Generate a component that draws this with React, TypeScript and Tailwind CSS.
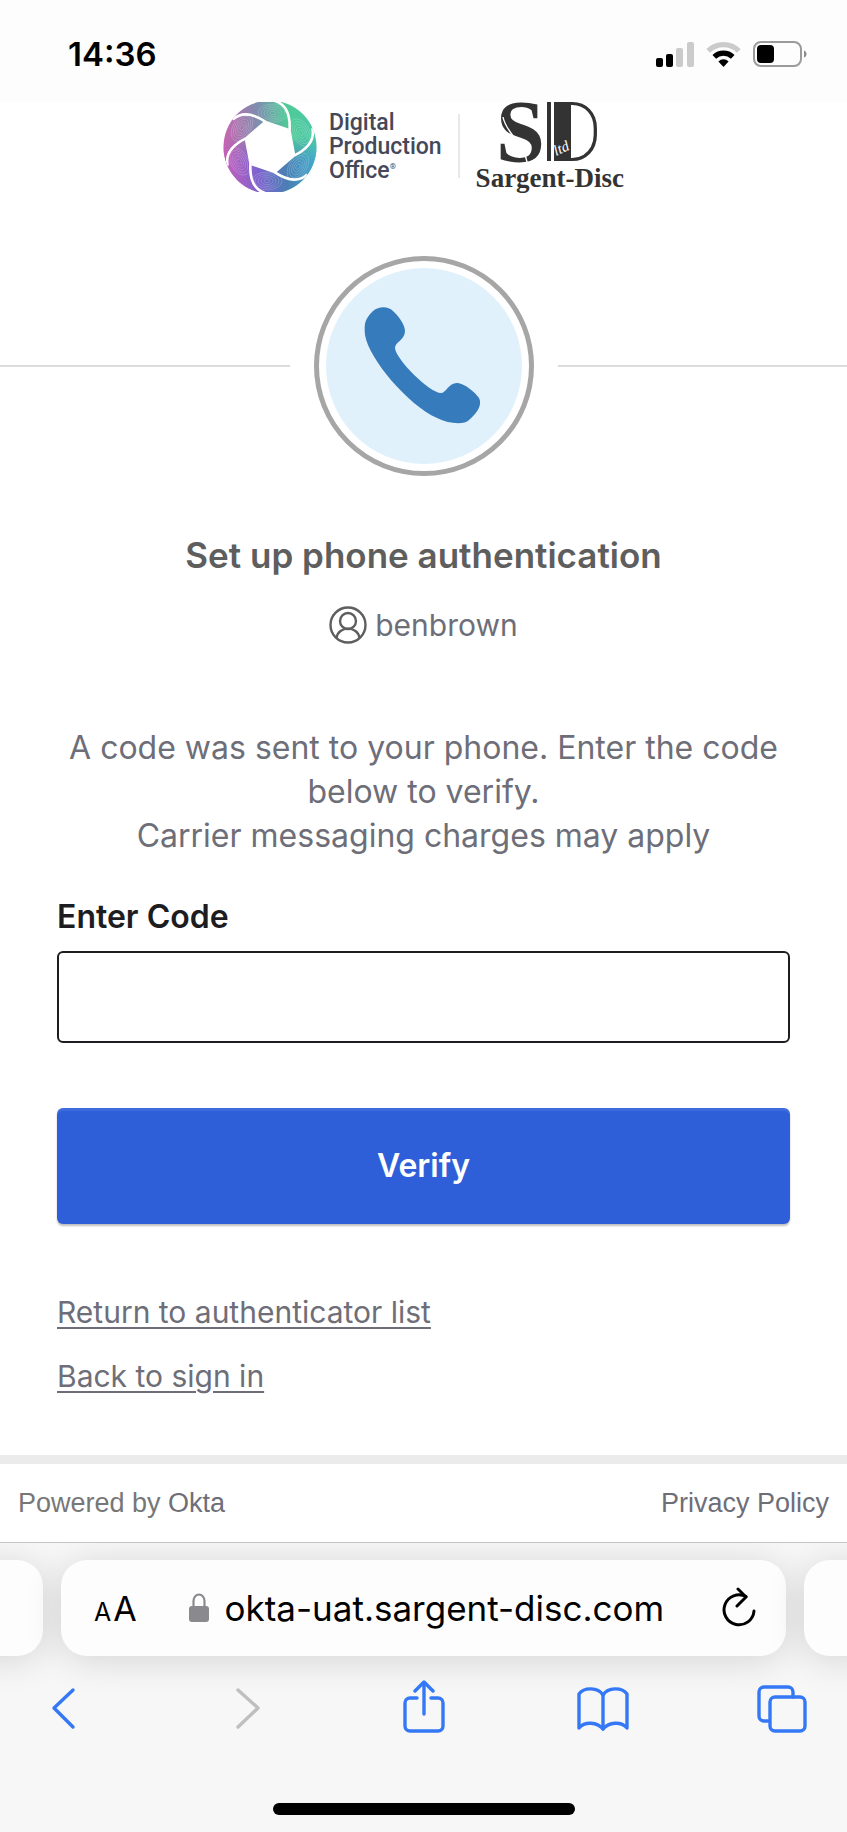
import { useState } from "react";

function StatusBar() {
  return (
    <header className="flex h-[102px] items-center justify-between bg-[#fdfdfd] pl-[68px] pr-10 pt-[6px]">
      <span className="text-[33px] leading-10 font-semibold text-black">14:36</span>
      <div className="flex items-center gap-3">
        <svg width="38" height="26" viewBox="0 0 38 26" aria-hidden="true">
          <rect x="0" y="17" width="7" height="9" rx="2" />
          <rect x="10" y="13" width="7" height="13" rx="2" />
          <rect x="20" y="7" width="7" height="19" rx="2" fill="#cbcbcb" />
          <rect x="31" y="1" width="7" height="25" rx="2" fill="#cbcbcb" />
        </svg>
        <svg width="35" height="26" viewBox="0 0 35 26" aria-hidden="true">
          <path d="M2.2 9.8A21.8 21.8 0 0 1 32.8 9.8" fill="none" stroke="#cbcbcb" strokeWidth="5.2" />
          <path d="M8.3 15.9A13.2 13.2 0 0 1 26.7 15.9" fill="none" stroke="#000" strokeWidth="5.2" />
          <path d="M12.4 20.4a7.3 7.3 0 0 1 10.2 0L17.5 26z" />
        </svg>
        <svg width="54" height="26" viewBox="0 0 54 26" aria-hidden="true">
          <rect x="1" y="1" width="47" height="24" rx="7" fill="none" stroke="#9b9b9b" strokeWidth="2" />
          <rect x="4" y="4" width="17" height="18" rx="4" />
          <path d="M51 9.5c3.4 1 3.4 6 0 7z" fill="#8d8d8d" />
        </svg>
      </div>
    </header>
  );
}

const blades = [0, 60, 120, 180, 240, 300];
const ripples = [3, 6, 9, 12, 15];

function ApertureLogo() {
  return (
    <svg width="94" height="90" viewBox="0 2 94 90" aria-hidden="true">
      <defs>
        <linearGradient id="ap-a" x1="0" y1="0.4" x2="1" y2="0.3">
          <stop offset="0" stopColor="#c964b0" />
          <stop offset="0.4" stopColor="#7d8fae" />
          <stop offset="0.7" stopColor="#4fcb98" />
          <stop offset="1" stopColor="#4cc7a8" />
        </linearGradient>
        <linearGradient id="ap-b" x1="0" y1="0.6" x2="1" y2="0.5">
          <stop offset="0" stopColor="#c45fbb" />
          <stop offset="0.35" stopColor="#7d63cf" />
          <stop offset="0.65" stopColor="#4a7fb4" />
          <stop offset="1" stopColor="#43aed0" />
        </linearGradient>
        <linearGradient id="ap-fade" x1="0" y1="0" x2="0" y2="1">
          <stop offset="0.4" stopColor="#000" />
          <stop offset="0.65" stopColor="#fff" />
        </linearGradient>
        <mask id="ap-mask">
          <rect width="94" height="94" fill="url(#ap-fade)" />
        </mask>
        <clipPath id="ap-disc">
          <circle cx="47" cy="47" r="46.5" />
        </clipPath>
      </defs>
      <g clipPath="url(#ap-disc)">
        <rect width="94" height="94" fill="url(#ap-a)" />
        <rect width="94" height="94" fill="url(#ap-b)" mask="url(#ap-mask)" />
        {blades.map((angle) => (
          <g key={angle} transform={`rotate(${angle} 47 47)`} fill="none" stroke="#fff">
            {ripples.map((r) => (
              <ellipse key={r} cx="50" cy="13" rx={r} ry={r * 0.6} strokeWidth="0.6" opacity="0.3" />
            ))}
          </g>
        ))}
        <path d="M65.6 30.3 70.8 54.7 52.2 71.5 28.4 63.7 23.2 39.3 41.8 22.5Z" fill="#fff" />
        {blades.map((angle) => (
          <path
            key={angle}
            d="M71 54.700L66.500 31C67.500 17 65 5 52 1"
            transform={`rotate(${angle} 47 47)`}
            fill="none"
            stroke="#fff"
            strokeWidth="2.6"
            strokeLinejoin="round"
          />
        ))}
      </g>
    </svg>
  );
}

function SargentMonogram() {
  return (
    <svg className="overflow-visible" width="100" height="62" viewBox="0 0 100 62" role="img" aria-label="SD ltd">
      <text x="-4" y="59" fontFamily="Liberation Serif, serif" fontWeight="700" fontSize="88" fill="#333">
        S
      </text>
      <path d="M3 15C6 32 24 40 27 60" fill="none" stroke="#fff" strokeWidth="1.4" />
      <text x="48" y="59" fontFamily="Roboto, sans-serif" fontWeight="200" fontSize="83" fill="#333">
        D
      </text>
      <rect x="47" y="0" width="4" height="59" fill="#333" />
      <rect x="51" y="0" width="3" height="60" fill="#fff" />
      <rect x="54" y="0" width="17" height="59" fill="#333" />
      <text
        x="56"
        y="54"
        fontFamily="Liberation Serif, serif"
        fontStyle="italic"
        fontSize="15"
        fill="#fff"
        transform="rotate(-24 56 54)"
      >
        ltd
      </text>
    </svg>
  );
}

function Logos() {
  return (
    <div className="flex h-[90px] justify-center">
      <ApertureLogo />
      <div className="ml-3 flex flex-col pt-[9px] font-['Roboto',sans-serif] text-[23px] leading-6 font-medium text-[#454858]">
        <span>Digital</span>
        <span>Production</span>
        <span className="flex">
          Office<sup className="top-0 text-[8px] leading-4">®</sup>
        </span>
      </div>
      <div className="mt-3 ml-4 h-16 w-[2px] bg-[#e6e8e9]" />
      <div className="ml-4 flex flex-col items-center">
        <SargentMonogram />
        <span className="font-['Liberation_Serif',serif] text-[27px] leading-7 font-bold text-[#333]">
          Sargent-Disc
        </span>
      </div>
    </div>
  );
}

function PhoneBadge() {
  return (
    <div className="mt-16 flex items-center gap-6">
      <div className="h-[2px] flex-1 bg-[#dcdcdc]" />
      <div className="flex size-[220px] items-center justify-center rounded-full border-[5px] border-[#a6a6a6] bg-white">
        <svg width="196" height="196" viewBox="0 0 196 196" aria-hidden="true">
          <circle cx="98" cy="98" r="98" fill="#e1f1fc" />
          <path
            d="M47 43C53 38 62 38 67 43C74 49 79 58 79 63C79 72 69 74 69 80C70 92 104 125 115 125C120 125 123 114 132 115C139 116 149 124 153 130C157 138 149 147 143 152C138 157 123 156 111 150C82 137 43 91 39 67C38 55 39 51 47 43Z"
            fill="#367bbb"
          />
        </svg>
      </div>
      <div className="h-[2px] flex-1 bg-[#dcdcdc]" />
    </div>
  );
}

function UrlBar() {
  return (
    <div className="flex justify-center gap-[18px] overflow-hidden pt-[17px] pb-10">
      <div className="-ml-8 h-[96px] w-[75px] shrink-0 rounded-[26px] bg-[#fdfdfd] shadow-[0_4px_36px_rgba(0,0,0,0.14)]" />
      <div className="flex h-[96px] flex-1 items-center rounded-[26px] bg-[#fdfdfd] pr-[30px] pl-[33px] shadow-[0_4px_36px_rgba(0,0,0,0.14)]">
        <button type="button" aria-label="Page settings" className="flex items-baseline gap-[2px] pt-1 text-black">
          <span className="text-[25px] leading-10">A</span>
          <span className="text-[34px] leading-10">A</span>
        </button>
        <div className="flex flex-1 items-center justify-center gap-4 pr-[6px]">
          <svg width="20" height="30" viewBox="0 0 20 30" aria-hidden="true">
            <path d="M4.5 14V8a5.5 6.5 0 0 1 11 0v6" fill="none" stroke="#8a8a8e" strokeWidth="2.2" />
            <rect x="0" y="13" width="20" height="16" rx="3" fill="#8a8a8e" />
          </svg>
          <span className="text-[35px] leading-10 text-black">okta-uat.sargent-disc.com</span>
        </div>
        <button type="button" aria-label="Reload">
          <svg width="34" height="42" viewBox="0 0 34 42" fill="none" stroke="#000" strokeWidth="3" strokeLinecap="round" strokeLinejoin="round" aria-hidden="true">
            <path d="M24 9.5A15 15 0 1 0 32 24" />
            <path d="M16 2l8 8-9 9" />
          </svg>
        </button>
      </div>
      <div className="-mr-8 h-[96px] w-[75px] shrink-0 rounded-[26px] bg-[#fdfdfd] shadow-[0_4px_36px_rgba(0,0,0,0.14)]" />
    </div>
  );
}

const tools = [
  { name: "Back", color: "#3478f6", shapes: ["M35 8L16 26L35 45"] },
  { name: "Forward", color: "#bfbfbf", shapes: ["M21 8L41 26L21 45"] },
  {
    name: "Share",
    color: "#3478f6",
    shapes: ["M20 16H13a5 5 0 0 0-5 5V44a5 5 0 0 0 5 5H41a5 5 0 0 0 5-5V21a5 5 0 0 0-5-5H34", "M27 32V1M18 9L27 0L36 9"],
  },
  {
    name: "Bookmarks",
    color: "#3478f6",
    shapes: ["M27 13C22 5 8 5 3 12V46C9 39 21 40 27 47C33 40 45 39 51 46V12C46 5 32 5 27 13Z", "M27 13V47"],
  },
  {
    name: "Tabs",
    color: "#3478f6",
    shapes: [
      "M13 39H9a5 5 0 0 1-5-5V10a5 5 0 0 1 5-5H33a5 5 0 0 1 5 5V15",
      "M20 15H45a5 5 0 0 1 5 5V44a5 5 0 0 1-5 5H20a5 5 0 0 1-5-5V20a5 5 0 0 1 5-5Z",
    ],
  },
];

function BrowserBar() {
  return (
    <div className="flex flex-1 flex-col border-t border-[#c4c4c6] bg-[#f7f7f7]">
      <UrlBar />
      <nav className="-mt-4 flex justify-between px-[38px]">
        {tools.map((tool) => (
          <button key={tool.name} type="button" aria-label={tool.name} disabled={tool.name === "Forward"}>
            <svg
              width="54"
              height="54"
              viewBox="0 -2 54 54"
              fill="none"
              stroke={tool.color}
              strokeWidth="3.4"
              strokeLinecap="round"
              strokeLinejoin="round"
              aria-hidden="true"
            >
              {tool.shapes.map((d) => (
                <path key={d} d={d} />
              ))}
            </svg>
          </button>
        ))}
      </nav>
      <div className="mx-auto mt-auto mb-[17px] h-3 w-[302px] rounded-full bg-black" />
    </div>
  );
}

export default function App() {
  const [code, setCode] = useState("");

  return (
    <div className="flex min-h-screen flex-col bg-white font-['Inter',sans-serif] text-[#6e6e78]">
      <StatusBar />

      <main>
        <Logos />
        <PhoneBadge />

        <form className="px-[57px] pt-[57px]" onSubmit={(e) => e.preventDefault()}>
          <h1 className="text-center text-[35px] leading-[44px] font-semibold text-[#5e5e5e]">
            Set up phone authentication
          </h1>

          <div className="mt-[26px] flex items-center justify-center gap-2">
            <svg width="38" height="38" viewBox="0 0 38 38" fill="none" stroke="#5e5e5e" strokeWidth="2.4" aria-hidden="true">
              <circle cx="19" cy="19" r="17.5" />
              <circle cx="19" cy="15" r="8" />
              <path d="M7.5 32C9 19.5 29 19.5 30.5 32" />
            </svg>
            <span className="text-[30px] leading-[44px]">benbrown</span>
          </div>

          <p className="mt-[79px] text-center text-[32px] leading-[44px]">
            A code was sent to your phone. Enter the code below to verify.
            <br />
            Carrier messaging charges may apply
          </p>

          <label htmlFor="code" className="mt-[37px] block text-[32px] leading-[44px] font-semibold text-[#1d1d21]">
            Enter Code
          </label>
          <input
            id="code"
            type="text"
            inputMode="numeric"
            value={code}
            onChange={(e) => setCode(e.target.value)}
            className="mt-3 block h-[92px] w-full rounded-md border-2 border-[#1d1d21] bg-white px-6 text-[32px]"
          />

          <button
            type="submit"
            className="mt-[65px] block h-[116px] w-full rounded-md bg-[#2e5fd8] text-[32px] font-semibold text-white shadow-[0_2px_2px_rgba(0,0,0,0.25),inset_0_3px_0_rgba(255,255,255,0.08)]"
          >
            Verify
          </button>

          <div className="flex flex-col items-start gap-5 pt-[66px] pb-[57px] text-[30px] leading-[44px]">
            <a href="#list" className="underline decoration-2 underline-offset-4">
              Return to authenticator list
            </a>
            <a href="#signin" className="underline decoration-2 underline-offset-4">
              Back to sign in
            </a>
          </div>
        </form>
      </main>

      <footer className="flex h-[87px] items-center justify-between border-t-[9px] border-[#ebebeb] px-[18px] font-['Liberation_Sans',sans-serif] text-[27px] leading-8">
        <span className="text-[#777]">
          Powered by <a href="#okta" className="text-[#6e6e78]">Okta</a>
        </span>
        <a href="#privacy">Privacy Policy</a>
      </footer>

      <BrowserBar />
    </div>
  );
}
